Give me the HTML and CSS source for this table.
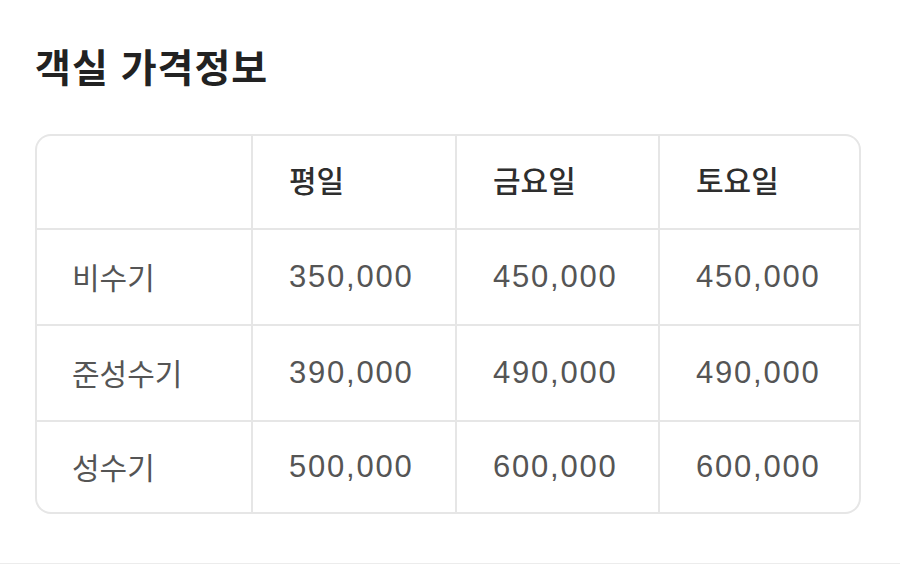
FILE: index.html
```html
<!DOCTYPE html>
<html lang="ko">
<head>
<meta charset="utf-8">
<link rel="stylesheet" href="styles.css">
</head>
<body>
<section class="page">
  <h1 class="title">객실 가격정보</h1>
  <div class="price-table">
    <div class="cell head"></div>
    <div class="cell head">평일</div>
    <div class="cell head">금요일</div>
    <div class="cell head">토요일</div>

    <div class="cell label">비수기</div>
    <div class="cell num">350,000</div>
    <div class="cell num">450,000</div>
    <div class="cell num">450,000</div>

    <div class="cell label">준성수기</div>
    <div class="cell num">390,000</div>
    <div class="cell num">490,000</div>
    <div class="cell num">490,000</div>

    <div class="cell label">성수기</div>
    <div class="cell num">500,000</div>
    <div class="cell num">600,000</div>
    <div class="cell num">600,000</div>
  </div>
</section>
<div class="divider"></div>
</body>
</html>
```
FILE: styles.css
```css
html, body {
  margin: 0;
  padding: 0;
  background: #ffffff;
}
body {
  width: 900px;
  height: 564px;
  overflow: hidden;
  font-family: "Noto Sans CJK KR", "Noto Sans", sans-serif;
}
.page {
  padding: 39px 39px 0 35px;
  height: 525px;
  box-sizing: border-box;
}
.title {
  margin: 0 0 43px 0;
  font-size: 39px;
  line-height: 52px;
  font-weight: 700;
  color: #222222;
  letter-spacing: 1px;
}
.price-table {
  display: grid;
  grid-template-columns: 214px 202px 201px 1fr;
  grid-template-rows: 92px 94px 94px 90px;
  gap: 2px;
  background: #e6e6e6;
  border: 2px solid #e6e6e6;
  border-radius: 16px;
  overflow: hidden;
}
.cell {
  background: #ffffff;
  display: flex;
  align-items: center;
  padding-left: 35px;
}
.head {
  font-size: 30px;
  font-weight: 500;
  color: #2e2e2e;
  padding-left: 36px;
  padding-bottom: 6px;
}
.label {
  font-size: 30px;
  font-weight: 400;
  color: #555555;
  padding-bottom: 2px;
}
.num {
  font-family: "Liberation Sans", Arial, sans-serif;
  font-size: 31px;
  letter-spacing: 1.8px;
  color: #555555;
  padding-left: 36px;
}
.divider {
  height: 1px;
  margin-top: 38px;
  background: #ececec;
}
```
